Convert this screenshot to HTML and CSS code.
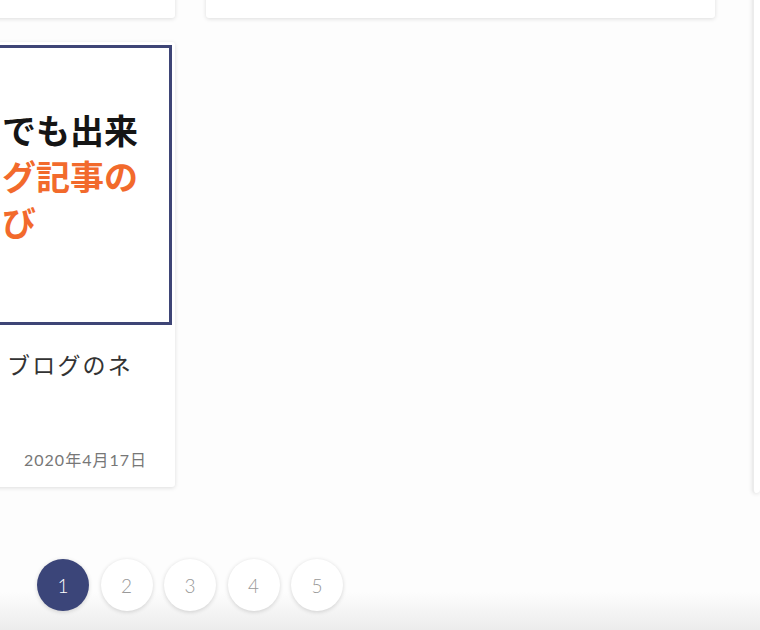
FILE: index.html
```html
<!DOCTYPE html>
<html lang="ja">
<head>
<meta charset="utf-8">
<title>ブログ</title>
<link rel="stylesheet" href="styles.css">
</head>
<body>
<div class="page">
  <div class="main">
    <div class="grid">
      <div class="card card-top"></div>
      <div class="card card-top card-wide"></div>
      <article class="card post">
        <div class="thumb">
          <p class="thumb-line dark">でも出来</p>
          <p class="thumb-line accent">グ記事の</p>
          <p class="thumb-line accent">び</p>
        </div>
        <h2 class="post-title">ブログのネ</h2>
        <div class="post-date">2020年4月17日</div>
      </article>
    </div>
    <nav class="pager">
      <a class="page-num active">1</a>
      <a class="page-num">2</a>
      <a class="page-num">3</a>
      <a class="page-num">4</a>
      <a class="page-num">5</a>
    </nav>
  </div>
  <aside class="sidebar"></aside>
</div>
</body>
</html>
```

FILE: styles.css
```css
html {
  background: linear-gradient(to bottom, #fdfdfd 0, #fdfdfd 592px, #ececec 630px);
  height: 630px;
}
body {
  margin: 0;
  height: 630px;
  overflow: hidden;
  font-family: "Noto Sans CJK JP", "Noto Sans", sans-serif;
}
.page {
  display: flex;
  align-items: flex-start;
}
.main {
  flex: 0 0 752px;
}
.grid {
  display: grid;
  grid-template-columns: repeat(3, 239px);
  column-gap: 31px;
  row-gap: 24px;
  margin-left: -64px;
  margin-top: -100px;
}
.card {
  background: #fff;
  border-radius: 3px;
  box-shadow: 0 1px 4px rgba(0, 0, 0, 0.13);
}
.card-top {
  height: 118px;
}
.card-wide {
  grid-column: span 2;
}
.post {
  padding: 3px;
  height: 445px;
  box-sizing: border-box;
  display: flex;
  flex-direction: column;
}
.thumb {
  height: 280px;
  box-sizing: border-box;
  border: 3px solid #3e4576;
  background: #fff;
  padding: 59px 0 0 60px;
  overflow: hidden;
}
.thumb-line {
  margin: 0;
  font-size: 34px;
  line-height: 46px;
  font-weight: 700;
  white-space: nowrap;
}
.dark {
  color: #151515;
}
.accent {
  color: #f26a2c;
}
.post-title {
  margin: 23px 0 0;
  padding: 0 0 0 68px;
  font-size: 23px;
  line-height: 33px;
  height: 33px;
  overflow: hidden;
  white-space: nowrap;
  font-weight: 400;
  color: #333;
  letter-spacing: 2.2px;
}
.post-date {
  margin-top: auto;
  padding: 0 25px 12px 0;
  text-align: right;
  font-family: "Lato", "Noto Sans CJK JP", sans-serif;
  font-size: 16px;
  line-height: 24px;
  letter-spacing: 1px;
  color: #777;
}
.pager {
  display: flex;
  gap: 11.5px;
  margin-top: 72px;
  padding-left: 37px;
}
.page-num {
  width: 52px;
  height: 52px;
  border-radius: 50%;
  background: #fff;
  box-shadow: 0 1px 4px rgba(0, 0, 0, 0.16);
  display: flex;
  align-items: center;
  justify-content: center;
  font-family: "Lato", sans-serif;
  font-weight: 300;
  font-size: 19px;
  color: #999;
}
.page-num.active {
  background: #3b4579;
  color: #fff;
}
.sidebar {
  flex: 1;
  margin-top: -100px;
  height: 593px;
  background: #fff;
  border-left: 2px solid #ececec;
  border-radius: 4px;
  box-shadow: 0 1px 4px rgba(0, 0, 0, 0.1);
}
```
